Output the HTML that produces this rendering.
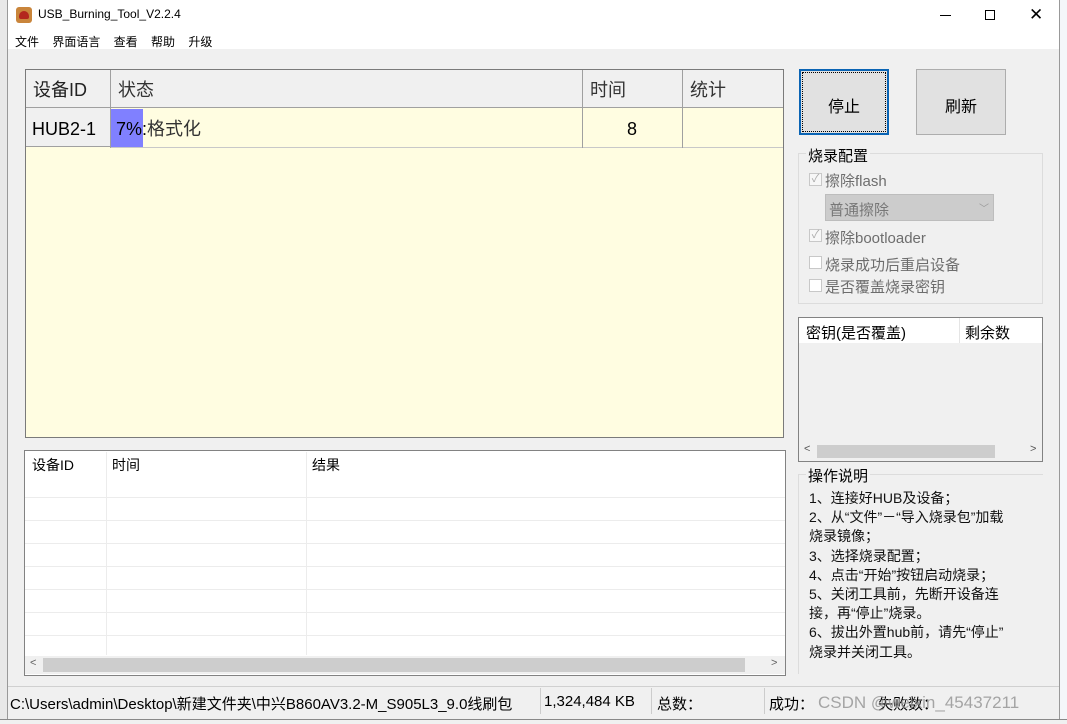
<!DOCTYPE html>
<html><head><meta charset="utf-8"><style>
*{box-sizing:border-box;margin:0;padding:0}
body{width:1067px;height:724px;position:relative;background:#fff;font-family:"Liberation Sans","Noto Sans CJK SC",sans-serif;overflow:hidden;color:#000}
.a{position:absolute}
.t{font-size:14px;white-space:nowrap}
</style></head><body>
<div class="a" style="left:0;top:0;width:8px;height:724px;background:#e8e8e8;border-right:1px solid #999"></div>
<div class="a" style="left:1059px;top:0;width:8px;height:724px;background:#f4f6f9;border-left:1px solid #999"></div>
<div class="a" style="left:8px;top:0;width:1051px;height:49px;background:#fff"></div>
<div class="a" style="left:16px;top:7px;width:16px;height:16px;border-radius:3px;background:#c9853b"><div class="a" style="left:3px;top:4px;width:10px;height:8px;border-radius:5px 5px 2px 2px;background:#b3261e"></div></div>
<div class="a t" style="left:38px;top:7px;font-size:12px">USB_Burning_Tool_V2.2.4</div>
<div class="a t" style="left:15px;top:33px;font-size:12px;word-spacing:10px">文件 界面语言 查看 帮助 升级</div>
<div class="a" style="left:940px;top:15px;width:11px;height:1px;background:#000"></div>
<div class="a" style="left:985px;top:10px;width:10px;height:10px;border:1px solid #000"></div>
<div class="a t" style="left:1029px;top:5px;font-size:17px">✕</div>
<div class="a" style="left:8px;top:49px;width:1051px;height:670px;background:#f0f0f0"></div>
<div class="a" style="left:25px;top:69px;width:759px;height:369px;background:#fffde1;border:1px solid #7a7a7a"></div>
<div class="a" style="left:26px;top:70px;width:757px;height:38px;background:#f0f0f0;border-bottom:1px solid #a0a0a0"></div>
<div class="a" style="left:26px;top:108px;width:84px;height:39px;background:#f0f0f0;border-bottom:1px solid #a0a0a0"></div>
<div class="a" style="left:110px;top:147px;width:673px;height:1px;background:#c8c8c8"></div>
<div class="a" style="left:110px;top:70px;width:1px;height:78px;background:#a0a0a0"></div>
<div class="a" style="left:582px;top:70px;width:1px;height:78px;background:#a0a0a0"></div>
<div class="a" style="left:682px;top:70px;width:1px;height:78px;background:#a0a0a0"></div>
<div class="a" style="left:111px;top:109px;width:32px;height:38px;background:#8080ff"></div>
<div class="a t" style="left:33px;top:79px;font-size:18px;line-height:22px;color:#222">设备ID</div>
<div class="a t" style="left:118px;top:79px;font-size:18px;line-height:22px;color:#333">状态</div>
<div class="a t" style="left:590px;top:79px;font-size:18px;line-height:22px;color:#333">时间</div>
<div class="a t" style="left:690px;top:79px;font-size:18px;line-height:22px;color:#333">统计</div>
<div class="a t" style="left:32px;top:118px;font-size:18px;line-height:22px">HUB2-1</div>
<div class="a t" style="left:116px;top:118px;font-size:18px;line-height:22px">7%:<span style="color:#333">格式化</span></div>
<div class="a t" style="left:627px;top:118px;font-size:18px;line-height:22px">8</div>
<div class="a" style="left:24px;top:450px;width:762px;height:226px;background:#fff;border:1px solid #828282"></div>
<div class="a" style="left:25px;top:475px;width:760px;height:180px;background:repeating-linear-gradient(#fff 0 22px,#ececec 22px 23px)"></div>
<div class="a" style="left:106px;top:452px;width:1px;height:203px;background:#ececec"></div>
<div class="a" style="left:306px;top:452px;width:1px;height:203px;background:#ececec"></div>
<div class="a t" style="left:32px;top:455px">设备ID</div>
<div class="a t" style="left:112px;top:455px">时间</div>
<div class="a t" style="left:312px;top:455px">结果</div>
<div class="a" style="left:25px;top:656px;width:760px;height:18px;background:#f0f0f0"></div>
<div class="a" style="left:43px;top:658px;width:702px;height:14px;background:#cdcdcd"></div>
<div class="a t" style="left:30px;top:657px;font-size:11px;color:#606060">&lt;</div>
<div class="a t" style="left:771px;top:657px;font-size:11px;color:#606060">&gt;</div>
<div class="a" style="left:799px;top:69px;width:90px;height:66px;background:#e1e1e1;border:2px solid #0a64b4;outline:1px dotted #000;outline-offset:-4px"></div>
<div class="a t" style="left:828px;top:93px;font-size:16px">停止</div>
<div class="a" style="left:916px;top:69px;width:90px;height:66px;background:#e1e1e1;border:1px solid #adadad"></div>
<div class="a t" style="left:945px;top:93px;font-size:16px">刷新</div>
<div class="a" style="left:798px;top:153px;width:245px;height:151px;border:1px solid #dcdcdc"></div>
<div class="a t" style="left:806px;top:145px;font-size:15px;background:#f0f0f0;padding:0 2px">烧录配置</div>
<div class="a" style="left:809px;top:173px;width:13px;height:13px;border:1px solid #c8c8c8;background:#f7f7f7;font-size:11px;line-height:11px;color:#aaa;text-align:center">✓</div>
<div class="a t" style="left:825px;top:170px;font-size:15px;color:#6d6d6d">擦除flash</div>
<div class="a" style="left:825px;top:194px;width:169px;height:27px;background:#cccccc;border:1px solid #bdbdbd"></div>
<div class="a t" style="left:829px;top:199px;font-size:15px;color:#777">普通擦除</div>
<div class="a t" style="left:979px;top:200px;font-size:10px;color:#999">﹀</div>
<div class="a" style="left:809px;top:229px;width:13px;height:13px;border:1px solid #c8c8c8;background:#f7f7f7;font-size:11px;line-height:11px;color:#aaa;text-align:center">✓</div>
<div class="a t" style="left:825px;top:227px;font-size:15px;color:#6d6d6d">擦除bootloader</div>
<div class="a" style="left:809px;top:256px;width:13px;height:13px;border:1px solid #c8c8c8;background:#fff"></div>
<div class="a t" style="left:825px;top:254px;font-size:15px;color:#6d6d6d">烧录成功后重启设备</div>
<div class="a" style="left:809px;top:279px;width:13px;height:13px;border:1px solid #c8c8c8;background:#fff"></div>
<div class="a t" style="left:825px;top:276px;font-size:15px;color:#6d6d6d">是否覆盖烧录密钥</div>
<div class="a" style="left:798px;top:317px;width:245px;height:145px;background:#f0f0f0;border:1px solid #828282"></div>
<div class="a" style="left:799px;top:318px;width:243px;height:25px;background:#fff"></div>
<div class="a" style="left:959px;top:318px;width:1px;height:25px;background:#e5e5e5"></div>
<div class="a t" style="left:806px;top:322px;font-size:15px">密钥(是否覆盖)</div>
<div class="a t" style="left:965px;top:322px;font-size:15px">剩余数</div>
<div class="a" style="left:817px;top:445px;width:178px;height:13px;background:#cdcdcd"></div>
<div class="a t" style="left:804px;top:443px;font-size:11px;color:#555">&lt;</div>
<div class="a t" style="left:1030px;top:443px;font-size:11px;color:#555">&gt;</div>
<div class="a" style="left:798px;top:474px;width:245px;height:200px;border-top:1px solid #dcdcdc;border-left:1px solid #dcdcdc"></div>
<div class="a t" style="left:806px;top:465px;font-size:15px;background:#f0f0f0;padding:0 2px">操作说明</div>
<div class="a t" style="left:809px;top:489px;font-size:14px;line-height:19.2px;color:#111">1、连接好HUB及设备；<br>2、从“文件”－“导入烧录包”加载<br>烧录镜像；<br>3、选择烧录配置；<br>4、点击“开始”按钮启动烧录；<br>5、关闭工具前，先断开设备连<br>接，再“停止”烧录。<br>6、拔出外置hub前，请先“停止”<br>烧录并关闭工具。</div>
<div class="a" style="left:8px;top:686px;width:1051px;height:1px;background:#d0d0d0"></div>
<div class="a t" style="left:10px;top:693px;font-size:15px;width:530px;overflow:hidden">C:\Users\admin\Desktop\新建文件夹\中兴B860AV3.2-M_S905L3_9.0线刷包</div>
<div class="a" style="left:540px;top:688px;width:1px;height:26px;background:#ccc"></div>
<div class="a t" style="left:544px;top:693px;font-size:15px">1,324,484 KB</div>
<div class="a" style="left:651px;top:688px;width:1px;height:26px;background:#ccc"></div>
<div class="a t" style="left:657px;top:693px;font-size:15px">总数：</div>
<div class="a" style="left:764px;top:688px;width:1px;height:26px;background:#ccc"></div>
<div class="a t" style="left:769px;top:693px;font-size:15px">成功：</div>
<div class="a t" style="left:878px;top:693px;font-size:15px">失败数：</div>
<div class="a t" style="left:818px;top:693px;font-size:17px;color:rgba(150,150,150,0.85)">CSDN @weixin_45437211</div>
<div class="a" style="left:0;top:719px;width:1067px;height:5px;background:#f0f0f0;border-top:1px solid #888"></div>
</body></html>
